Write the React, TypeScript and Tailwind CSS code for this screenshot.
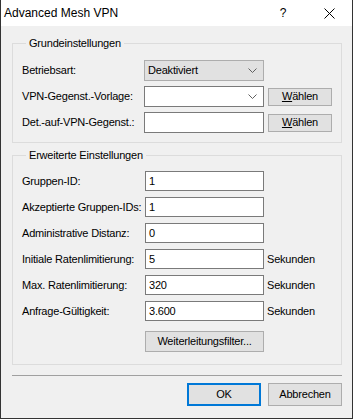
import React from "react";

const Chevron = () => (
  <svg width="9" height="5" viewBox="0 0 9 5" className="shrink-0">
    <polyline points="0.5,0.5 4.5,4.5 8.5,0.5" fill="none" stroke="#606060" strokeWidth="1" />
  </svg>
);

const Group: React.FC<{ title: string; className?: string; children: React.ReactNode }> = ({
  title,
  className = "",
  children,
}) => (
  <fieldset className={`border border-[#dcdcdc] ${className}`}>
    <legend className="ml-[4px] px-[3px] leading-[14px]">{title}</legend>
    {children}
  </fieldset>
);

const Field: React.FC<{ label: string; value: string; unit?: boolean }> = ({ label, value, unit }) => (
  <div className="flex items-center h-[20px]">
    <span className="w-[123px] whitespace-nowrap">{label}</span>
    <div className="w-[119px] h-[20px] border border-[#7a7a7a] bg-white pl-[3px] flex items-center">
      {value}
    </div>
    {unit && <span className="ml-[3px]">Sekunden</span>}
  </div>
);

const WButton = () => (
  <button className="ml-[4px] w-[64px] h-[18px] bg-[#e1e1e1] border border-[#adadad] flex items-center justify-center">
    <span>
      <span className="underline">W</span>ählen
    </span>
  </button>
);

export default function App() {
  return (
    <div className="w-[353px] h-[419px] flex flex-col bg-[#f0f0f0] border-x border-b border-[#333333] font-['Liberation_Sans',Arial,sans-serif] text-[11px] tracking-[-0.2px] text-black overflow-hidden">
      {/* Title bar */}
      <div className="h-[26px] bg-white flex items-center shrink-0">
        <span className="pl-[3px] text-[12px] tracking-normal flex-1">Advanced Mesh VPN</span>
        <div className="w-[46px] h-[26px] flex items-center justify-center text-[12px]">?</div>
        <div className="w-[46px] h-[26px] flex items-center justify-center">
          <svg width="11" height="11" viewBox="0 0 11 11">
            <line x1="0.5" y1="0.5" x2="10.5" y2="10.5" stroke="#000" strokeWidth="1" />
            <line x1="10.5" y1="0.5" x2="0.5" y2="10.5" stroke="#000" strokeWidth="1" />
          </svg>
        </div>
      </div>

      {/* Body */}
      <div className="flex flex-col pt-[10px] pl-[11px] pr-[10px]">
        <Group title="Grundeinstellungen" className="pt-[10px] pb-[9px] pl-[9px] pr-[9px]">
          <div className="flex flex-col gap-[5px]">
            <div className="flex items-center h-[21px]">
              <span className="w-[122px] whitespace-nowrap">Betriebsart:</span>
              <div className="w-[120px] h-[21px] bg-[#e1e1e1] border border-[#adadad] pl-[3px] pr-[6px] flex items-center justify-between">
                <span>Deaktiviert</span>
                <Chevron />
              </div>
            </div>
            <div className="flex items-center h-[21px]">
              <span className="w-[122px] whitespace-nowrap">VPN-Gegenst.-Vorlage:</span>
              <div className="w-[120px] h-[21px] bg-white border border-[#7a7a7a] pl-[3px] pr-[6px] flex items-center justify-end">
                <Chevron />
              </div>
              <WButton />
            </div>
            <div className="flex items-center h-[21px]">
              <span className="w-[122px] whitespace-nowrap">Det.-auf-VPN-Gegenst.:</span>
              <div className="w-[120px] h-[21px] bg-white border border-[#7a7a7a]" />
              <WButton />
            </div>
          </div>
        </Group>

        <Group title="Erweiterte Einstellungen" className="mt-[5px] pt-[9px] pb-[12px] pl-[9px] pr-[9px]">
          <div className="flex flex-col gap-[6px]">
            <Field label="Gruppen-ID:" value="1" />
            <Field label="Akzeptierte Gruppen-IDs:" value="1" />
            <Field label="Administrative Distanz:" value="0" />
            <Field label="Initiale Ratenlimitierung:" value="5" unit />
            <Field label="Max. Ratenlimitierung:" value="320" unit />
            <Field label="Anfrage-Gültigkeit:" value="3.600" unit />
          </div>
          <button className="mt-[10px] ml-[123px] w-[119px] h-[21px] bg-[#e1e1e1] border border-[#adadad] flex items-center justify-center">
            Weiterleitungsfilter...
          </button>
        </Group>

        <div className="mt-[10px] border-t border-[#a0a0a0]" />

        <div className="mt-[7px] flex justify-end gap-[7px]">
          <button className="w-[74px] h-[23px] bg-[#e1e1e1] border-2 border-[#0078d7] flex items-center justify-center">
            OK
          </button>
          <button className="w-[74px] h-[23px] bg-[#e1e1e1] border border-[#adadad] flex items-center justify-center">
            Abbrechen
          </button>
        </div>
      </div>
    </div>
  );
}
